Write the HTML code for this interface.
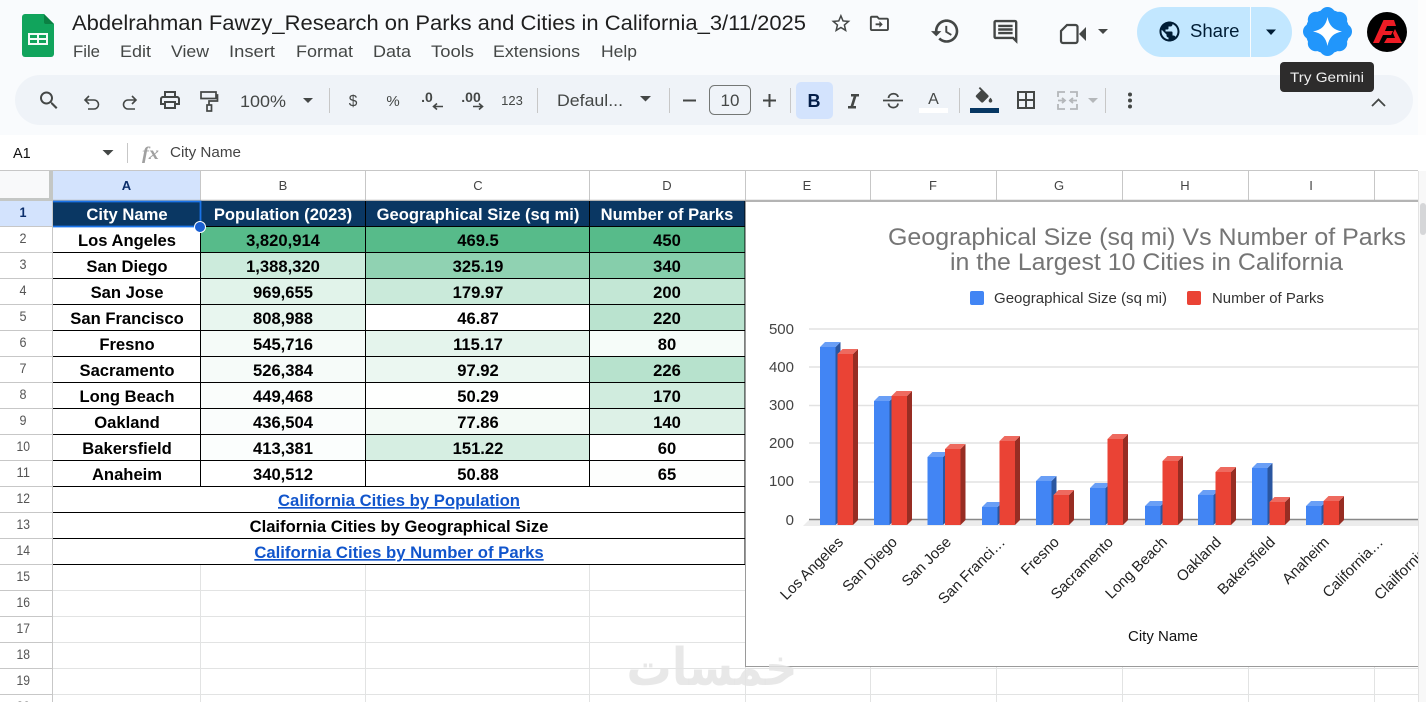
<!DOCTYPE html>
<html lang="en"><head><meta charset="utf-8"><title>Sheets</title>
<style>
html,body{margin:0;padding:0;background:#fff;width:1426px;height:702px;overflow:hidden}
svg{display:block;font-family:"Liberation Sans",Arial,sans-serif}
.m{font-size:16.5px;fill:#444746}
.ch{font-size:13px;fill:#444;text-anchor:middle}
.rh{font-size:13.5px;fill:#555}
.c{font-size:16.6px;font-weight:bold;fill:#000;text-anchor:middle}
.h{font-size:16.6px;font-weight:bold;fill:#fff;text-anchor:middle}
.l{font-size:16.7px;font-weight:bold;fill:#1155cc;text-anchor:middle;text-decoration:underline}
.ax{font-size:15px;fill:#444;text-anchor:end}
.xl{font-size:15px;fill:#222;text-anchor:end}
.ic{fill:#444746}
.tb{font-size:17px;fill:#444746}
</style></head><body>
<svg width="1426" height="702" viewBox="0 0 1426 702" xmlns="http://www.w3.org/2000/svg">
<defs><clipPath id="cc"><rect x="746" y="202" width="672" height="464"/></clipPath></defs>
<rect width="1426" height="702" fill="#fff"/>
<rect width="1418" height="135" fill="#f9fbfd"/>
<rect x="1418" width="8" height="135" fill="#fdfdfd"/>

<!-- logo -->
<path d="M25 14H44L54 24V54a3 3 0 0 1-3 3H25a3 3 0 0 1-3-3V17a3 3 0 0 1 3-3z" fill="#11a45c"/>
<path d="M44 14L54 24H46a2 2 0 0 1-2-2z" fill="#0b8043"/>
<path d="M28 33h20v12H28zM30 35v3h7v-3zM39 35v3h7v-3zM30 40v3h7v-3zM39 40v3h7v-3z" fill="#f3fbf6" fill-rule="evenodd"/>

<!-- title / menu -->
<text x="72" y="30" font-size="21.5" fill="#1f1f1f" textLength="734" lengthAdjust="spacingAndGlyphs">Abdelrahman Fawzy_Research on Parks and Cities in California_3/11/2025</text>
<text class="m" x="73" y="57" textLength="27" lengthAdjust="spacingAndGlyphs">File</text>
<text class="m" x="120" y="57" textLength="31" lengthAdjust="spacingAndGlyphs">Edit</text>
<text class="m" x="171" y="57" textLength="38" lengthAdjust="spacingAndGlyphs">View</text>
<text class="m" x="229" y="57" textLength="46" lengthAdjust="spacingAndGlyphs">Insert</text>
<text class="m" x="296" y="57" textLength="57" lengthAdjust="spacingAndGlyphs">Format</text>
<text class="m" x="373" y="57" textLength="38" lengthAdjust="spacingAndGlyphs">Data</text>
<text class="m" x="431" y="57" textLength="43" lengthAdjust="spacingAndGlyphs">Tools</text>
<text class="m" x="493" y="57" textLength="87" lengthAdjust="spacingAndGlyphs">Extensions</text>
<text class="m" x="601" y="57" textLength="36" lengthAdjust="spacingAndGlyphs">Help</text>

<!-- star + move -->
<path class="ic" transform="translate(829.5 12) scale(.95)" d="M22 9.24l-7.19-.62L12 2 9.19 8.63 2 9.24l5.46 4.73L5.82 21 12 17.27 18.18 21l-1.63-7.03L22 9.24zM12 15.4l-3.76 2.27 1-4.28-3.32-2.88 4.38-.38L12 6.1l1.71 4.04 4.38.38-3.32 2.88 1 4.28L12 15.4z"/>
<path class="ic" transform="translate(868 12) scale(.95)" d="M20 6h-8l-2-2H4c-1.1 0-1.99.9-1.99 2L2 18c0 1.1.9 2 2 2h16c1.100 0 2-.9 2-2V8c0-1.100-.9-2-2-2zm0 12H4V6h5.170l2 2H20v10zM12 14H8v-2h4v-2.500L15.500 13 12 16.500z"/>
<!-- history -->
<path class="ic" transform="translate(929.7 15.5) scale(1.3)" d="M13 3c-4.97 0-9 4.03-9 9H1l3.89 3.89.07.14L9 12H6c0-3.87 3.13-7 7-7s7 3.13 7 7-3.13 7-7 7c-1.93 0-3.68-.79-4.94-2.06l-1.42 1.42C8.27 19.99 10.51 21 13 21c4.97 0 9-4.03 9-9s-4.03-9-9-9zm-1 5v5l4.28 2.54.72-1.21-3.5-2.08V8H12z"/>
<!-- comment -->
<path class="ic" transform="translate(991 17.500) scale(1.2)" d="M21.99 4c0-1.100-.89-2-1.990-2H4c-1.100 0-2 .9-2 2v12c0 1.100.9 2 2 2h14l4 4-.01-18zM20 4v13.170L18.830 16H4V4h16zM6 12h12v2H6zm0-3h12v2H6zm0-3h12v2H6z"/>
<!-- video -->
<path d="M1067 25h8.500a2 2 0 0 1 2 2v14a2 2 0 0 1-2 2H1063a2 2 0 0 1-2-2V31z" fill="none" stroke="#444746" stroke-width="2.200"/>
<path d="M1079 34l7-7v14z" fill="#444746"/>
<path d="M1098 29h10l-5 5z" fill="#444746"/>
<!-- share -->
<path d="M1162 7H1250V57H1162a25 25 0 0 1 0-50z" fill="#c2e7ff"/>
<path d="M1251 7H1267a25 25 0 0 1 0 50H1251z" fill="#c2e7ff"/>
<path transform="translate(1157.500 19.500) scale(1)" fill="#001d35" d="M12 2C6.480 2 2 6.480 2 12s4.480 10 10 10 10-4.480 10-10S17.520 2 12 2zm-1 17.930c-3.950-.49-7-3.850-7-7.930 0-.62.080-1.210.21-1.790L9 15v1c0 1.100.9 2 2 2v1.930zm6.900-2.540c-.26-.81-1-1.390-1.900-1.390h-1v-3c0-.55-.45-1-1-1H8v-2h2c.55 0 1-.45 1-1V7h2c1.100 0 2-.9 2-2v-.41c2.930 1.190 5 4.060 5 7.410 0 2.080-.8 3.970-2.100 5.390z"/>
<text x="1190" y="37" font-size="18" fill="#001d35" textLength="49.500" lengthAdjust="spacingAndGlyphs">Share</text>
<path d="M1266 29.500h10l-5 5.500z" fill="#001d35"/>
<!-- gemini -->
<g fill="#2196fb">
<circle cx="1327.500" cy="31.500" r="22"/>
<circle cx="1327.500" cy="15" r="8"/><circle cx="1327.500" cy="48" r="8"/><circle cx="1311" cy="31.500" r="8"/><circle cx="1344" cy="31.500" r="8"/>
<circle cx="1315.800" cy="19.800" r="8"/><circle cx="1339.200" cy="19.800" r="8"/><circle cx="1315.800" cy="43.200" r="8"/><circle cx="1339.200" cy="43.200" r="8"/>
</g>
<path transform="translate(1327.500 31.500)" fill="#fff" d="M0-14.500C1.500-6 6-1.500 14.500 0 6 1.500 1.500 6 0 14.500-1.500 6-6 1.500-14.500 0-6-1.500-1.500-6 0-14.500Z"/>
<!-- avatar -->
<circle cx="1387" cy="32" r="20" fill="#000"/>
<path fill="#ee1c25" d="M1373 43L1383.500 20H1394L1396 26H1387L1385 31H1393L1391 35H1383L1379 43Z"/>
<path fill="#ee1c25" d="M1395 29L1402 43H1384L1387 38H1395L1393 33Z"/>

<!-- toolbar -->
<rect x="15" y="75" width="1398" height="50" rx="25" fill="#eff3f8"/>
<path class="ic" transform="translate(37 88.500)" d="M15.500 14h-.79l-.28-.27C15.410 12.590 16 11.110 16 9.500 16 5.910 13.090 3 9.500 3S3 5.910 3 9.500 5.910 16 9.500 16c1.610 0 3.090-.59 4.230-1.570l.27.28v.79l5 4.990L20.490 19l-4.990-5zm-6 0C7.010 14 5 11.990 5 9.500S7.010 5 9.500 5 14 7.010 14 9.500 11.990 14 9.500 14z"/>
<path d="M89 96l-4 4 4 4M85.500 100H94a4.500 4.500 0 0 1 0 9h-6" fill="none" stroke="#444746" stroke-width="1.600"/>
<path d="M132 96l4 4-4 4M135.500 100H128a4.500 4.500 0 0 0 0 9h7" fill="none" stroke="#444746" stroke-width="1.600"/>
<path class="ic" transform="translate(158 88)" d="M19 8h-1V3H6v5H5c-1.660 0-3 1.340-3 3v6h4v4h12v-4h4v-6c0-1.660-1.340-3-3-3zM8 5h8v3H8V5zm8 12v2H8v-4h8v2zm2-2v-2H6v2H4v-4c0-.55.45-1 1-1h14c.55 0 1 .45 1 1v4h-2z"/>
<path d="M201 92h15v6.500h-15zM216 95h1.500v6h-8.500v4" fill="none" stroke="#444746" stroke-width="1.700"/>
<rect x="207" y="105" width="4.500" height="6" fill="none" stroke="#444746" stroke-width="1.700"/>
<text class="tb" x="240" y="107" textLength="46" lengthAdjust="spacingAndGlyphs">100%</text>
<path class="ic" d="M303 98h10l-5 5z"/>
<path d="M329.500 88v25M537.500 88v25M669.500 88v25M790.500 88v25M959.500 88v25M1105.500 88v25" stroke="#c7c7c7"/>
<text x="353" y="106" font-size="15.500" fill="#444746" text-anchor="middle">$</text>
<text x="393" y="106" font-size="15" fill="#444746" text-anchor="middle">%</text>
<text x="427" y="102" font-size="14" fill="#444746" font-weight="bold" text-anchor="middle">.0</text>
<path d="M443 106.500h-9.500M437 103.500l-3.500 3 3.500 3" fill="none" stroke="#444746" stroke-width="1.600"/>
<text x="471" y="102" font-size="14" fill="#444746" font-weight="bold" text-anchor="middle">.00</text>
<path d="M473 106.500h9M479 103.500l3.500 3-3.500 3" fill="none" stroke="#444746" stroke-width="1.600"/>
<text x="512" y="105" font-size="13" fill="#444746" text-anchor="middle">123</text>
<text class="tb" x="557" y="106" textLength="66" lengthAdjust="spacingAndGlyphs">Defaul...</text>
<path class="ic" d="M640 96h11l-5.500 5.500z"/>
<path d="M683 100.500h13M763 100.500h13M769.500 94v13" stroke="#444746" stroke-width="2" fill="none"/>
<rect x="709.500" y="85.500" width="41" height="29" rx="5" fill="#eff3f8" stroke="#747775"/>
<text class="tb" x="730" y="106" text-anchor="middle" font-size="17.500">10</text>
<rect x="796" y="82" width="37" height="37" rx="5" fill="#d3e3fd"/>
<text x="814" y="107" font-size="18" font-weight="bold" fill="#041e49" text-anchor="middle">B</text>
<path class="ic" d="M851 94h8v2.500h-2.600l-3 9.500h2.600v2.500h-8V106h2.600l3-9.500H851z"/>
<path d="M883 100.500h20" stroke="#444746" stroke-width="1.800"/>
<path d="M888.500 98c.5-5.500 9-5.500 9.500-1M888.500 103.500c.5 5.500 9 5.500 9.500 0" fill="none" stroke="#444746" stroke-width="1.800"/>
<text x="933.500" y="104" font-size="16" fill="#444746" text-anchor="middle">A</text>
<rect x="919" y="108" width="29" height="5" fill="#fff"/>
<path class="ic" transform="translate(973 87) scale(.92)" d="M16.560 8.940L7.620 0 6.210 1.410l2.380 2.380-5.150 5.150c-.59.59-.59 1.540 0 2.120l5.500 5.500c.29.29.68.44 1.060.44s.77-.15 1.060-.44l5.500-5.500c.59-.58.59-1.530 0-2.120zM19 11.500s-2 2.170-2 3.500c0 1.100.9 2 2 2s2-.9 2-2c0-1.330-2-3.500-2-3.500z"/>
<rect x="970" y="108" width="29" height="5" fill="#073763"/>
<path class="ic" transform="translate(1014 88)" d="M3 3v18h18V3H3zm8 16H5v-6h6v6zm0-8H5V5h6v6zm8 8h-6v-6h6v6zm0-8h-6V5h6v6z"/>
<g fill="none" stroke="#b4b7ba" stroke-width="1.800">
<path d="M1058 97v-5h7M1058 104v5h7M1077 97v-5h-7M1077 104v5h-7"/>
<path d="M1058 100.500h6M1062 98l3 2.500-3 2.500M1077 100.500h-6M1073 98l-3 2.500 3 2.500"/>
</g>
<path fill="#b4b7ba" d="M1088 98h10l-5 5z"/>
<circle class="ic" cx="1130" cy="94.500" r="2"/><circle class="ic" cx="1130" cy="100.500" r="2"/><circle class="ic" cx="1130" cy="106.500" r="2"/>
<path d="M1372 106l6.500-6.500 6.500 6.500" fill="none" stroke="#444746" stroke-width="1.800"/>

<!-- tooltip -->
<rect x="1280" y="62" width="94" height="30" rx="4" fill="#2d2c2c"/>
<text x="1327" y="82" font-size="14" fill="#efefef" text-anchor="middle" textLength="74" lengthAdjust="spacingAndGlyphs">Try Gemini</text>

<!-- formula bar -->
<text x="13" y="158" font-size="14.500" fill="#111">A1</text>
<path fill="#444746" d="M102.500 150h11l-5.500 5.500z"/>
<path d="M127.500 143v20" stroke="#c7c7c7"/>
<text x="142" y="159" font-size="18" font-style="italic" font-family="Liberation Serif,serif" fill="#a0a0a0" font-weight="bold" textLength="17" lengthAdjust="spacingAndGlyphs">fx</text>
<text x="170" y="157" font-size="14.500" fill="#444" textLength="71" lengthAdjust="spacingAndGlyphs">City Name</text>

<!-- grid headers -->
<path d="M0 170.500H1418" stroke="#c7c7c7" stroke-width="1"/>
<rect x="0" y="171" width="52" height="30" fill="#f8f9fa"/>
<rect x="49" y="171" width="4" height="30" fill="#c4c7c5"/>
<rect x="0" y="198" width="53" height="3" fill="#c4c7c5"/>
<rect x="53" y="171" width="147" height="30" fill="#d3e3fd"/>
<rect x="0" y="201" width="52" height="25" fill="#d3e3fd"/>
<path d="M200.500 171v29M365.500 171v29M589.500 171v29M745.500 171v29M870.500 171v29M996.500 171v29M1122.500 171v29M1248.500 171v29M1374.500 171v29" stroke="#c7c7c7"/>
<path d="M53 200.500H1418" stroke="#b4b4b4" stroke-width="1.500"/>
<text class="ch" x="126.500" y="190" font-weight="bold" style="fill:#0b2e6b">A</text>
<text class="ch" x="283" y="190">B</text>
<text class="ch" x="478" y="190">C</text>
<text class="ch" x="667" y="190">D</text>
<text class="ch" x="807" y="190">E</text>
<text class="ch" x="933" y="190">F</text>
<text class="ch" x="1059" y="190">G</text>
<text class="ch" x="1185" y="190">H</text>
<text class="ch" x="1311" y="190">I</text>

<!-- row headers -->
<path d="M52.500 201V702" stroke="#c7c7c7"/>
<path d="M0 226.500h52M0 252.500h52M0 278.500h52M0 304.500h52M0 330.500h52M0 356.500h52M0 382.500h52M0 408.500h52M0 434.500h52M0 460.500h52M0 486.500h52M0 512.500h52M0 538.500h52M0 564.500h52M0 590.500h52M0 616.500h52M0 642.500h52M0 668.500h52M0 694.500h52" stroke="#c7c7c7"/>
<text class="rh" x="19.500" y="217" font-weight="bold" style="fill:#0b2e6b" textLength="7" lengthAdjust="spacingAndGlyphs">1</text>
<text class="rh" x="19.500" y="243" textLength="7" lengthAdjust="spacingAndGlyphs">2</text>
<text class="rh" x="19.500" y="269" textLength="7" lengthAdjust="spacingAndGlyphs">3</text>
<text class="rh" x="19.500" y="295" textLength="7" lengthAdjust="spacingAndGlyphs">4</text>
<text class="rh" x="19.500" y="321" textLength="7" lengthAdjust="spacingAndGlyphs">5</text>
<text class="rh" x="19.500" y="347" textLength="7" lengthAdjust="spacingAndGlyphs">6</text>
<text class="rh" x="19.500" y="373" textLength="7" lengthAdjust="spacingAndGlyphs">7</text>
<text class="rh" x="19.500" y="399" textLength="7" lengthAdjust="spacingAndGlyphs">8</text>
<text class="rh" x="19.500" y="425" textLength="7" lengthAdjust="spacingAndGlyphs">9</text>
<text class="rh" x="16.500" y="451" textLength="13.500" lengthAdjust="spacingAndGlyphs">10</text>
<text class="rh" x="16.500" y="477" textLength="13.500" lengthAdjust="spacingAndGlyphs">11</text>
<text class="rh" x="16.500" y="503" textLength="13.500" lengthAdjust="spacingAndGlyphs">12</text>
<text class="rh" x="16.500" y="529" textLength="13.500" lengthAdjust="spacingAndGlyphs">13</text>
<text class="rh" x="16.500" y="555" textLength="13.500" lengthAdjust="spacingAndGlyphs">14</text>
<text class="rh" x="16.500" y="581" textLength="13.500" lengthAdjust="spacingAndGlyphs">15</text>
<text class="rh" x="16.500" y="607" textLength="13.500" lengthAdjust="spacingAndGlyphs">16</text>
<text class="rh" x="16.500" y="633" textLength="13.500" lengthAdjust="spacingAndGlyphs">17</text>
<text class="rh" x="16.500" y="659" textLength="13.500" lengthAdjust="spacingAndGlyphs">18</text>
<text class="rh" x="16.500" y="685" textLength="13.500" lengthAdjust="spacingAndGlyphs">19</text>
<text class="rh" x="16.500" y="711" textLength="13.500" lengthAdjust="spacingAndGlyphs">20</text>

<!-- empty grid -->
<path d="M53 590.500H745M53 616.500H745M53 642.500H745M53 668.500H1418M53 694.500H1418M200.500 565V702M365.500 565V702M589.500 565V702M745.500 565V702M870.500 666V702M996.500 666V702M1122.500 666V702M1248.500 666V702M1374.500 666V702" stroke="#e2e3e3"/>

<!-- table -->
<rect x="53" y="201" width="692" height="25" fill="#0a3763"/>
<g>
<rect x="201" y="227" width="164" height="25" fill="#57bb8a"/><rect x="366" y="227" width="223" height="25" fill="#57bb8a"/><rect x="590" y="227" width="155" height="25" fill="#57bb8a"/>
<rect x="201" y="253" width="164" height="25" fill="rgb(204,235,220)"/><rect x="366" y="253" width="223" height="25" fill="rgb(144,210,178)"/><rect x="590" y="253" width="155" height="25" fill="rgb(134,206,171)"/>
<rect x="201" y="279" width="164" height="25" fill="rgb(225,243,234)"/><rect x="366" y="279" width="223" height="25" fill="rgb(202,234,218)"/><rect x="590" y="279" width="155" height="25" fill="rgb(195,231,213)"/>
<rect x="201" y="305" width="164" height="25" fill="rgb(232,246,239)"/><rect x="590" y="305" width="155" height="25" fill="rgb(186,227,207)"/>
<rect x="201" y="331" width="164" height="25" fill="rgb(245,251,248)"/><rect x="366" y="331" width="223" height="25" fill="rgb(228,244,236)"/><rect x="590" y="331" width="155" height="25" fill="rgb(246,252,249)"/>
<rect x="201" y="357" width="164" height="25" fill="rgb(246,251,249)"/><rect x="366" y="357" width="223" height="25" fill="rgb(235,247,241)"/><rect x="590" y="357" width="155" height="25" fill="rgb(183,226,205)"/>
<rect x="201" y="383" width="164" height="25" fill="rgb(250,253,251)"/><rect x="366" y="383" width="223" height="25" fill="rgb(254,255,254)"/><rect x="590" y="383" width="155" height="25" fill="rgb(208,236,222)"/>
<rect x="201" y="409" width="164" height="25" fill="rgb(250,253,252)"/><rect x="366" y="409" width="223" height="25" fill="rgb(243,250,246)"/><rect x="590" y="409" width="155" height="25" fill="rgb(221,241,231)"/>
<rect x="201" y="435" width="164" height="25" fill="rgb(251,254,253)"/><rect x="366" y="435" width="223" height="25" fill="rgb(214,238,226)"/>
<rect x="590" y="461" width="155" height="25" fill="rgb(253,254,253)"/>
</g>
<path d="M53 226.500H745M53 252.500H745M53 278.500H745M53 304.500H745M53 330.500H745M53 356.500H745M53 382.500H745M53 408.500H745M53 434.500H745M53 460.500H745M53 486.500H745M53 512.500H745M53 538.500H745M53 564.500H745M200.500 201V486M365.500 201V486M589.500 201V486M745 201V565" stroke="#000"/>

<text class="h" x="127" y="220">City Name</text>
<text class="h" x="283" y="220">Population (2023)</text>
<text class="h" x="478" y="220">Geographical Size (sq mi)</text>
<text class="h" x="667" y="220">Number of Parks</text>

<text class="c" x="127" y="246">Los Angeles</text><text class="c" x="283" y="246">3,820,914</text><text class="c" x="478" y="246">469.5</text><text class="c" x="667" y="246">450</text>
<text class="c" x="127" y="272">San Diego</text><text class="c" x="283" y="272">1,388,320</text><text class="c" x="478" y="272">325.19</text><text class="c" x="667" y="272">340</text>
<text class="c" x="127" y="298">San Jose</text><text class="c" x="283" y="298">969,655</text><text class="c" x="478" y="298">179.97</text><text class="c" x="667" y="298">200</text>
<text class="c" x="127" y="324">San Francisco</text><text class="c" x="283" y="324">808,988</text><text class="c" x="478" y="324">46.87</text><text class="c" x="667" y="324">220</text>
<text class="c" x="127" y="350">Fresno</text><text class="c" x="283" y="350">545,716</text><text class="c" x="478" y="350">115.17</text><text class="c" x="667" y="350">80</text>
<text class="c" x="127" y="376">Sacramento</text><text class="c" x="283" y="376">526,384</text><text class="c" x="478" y="376">97.92</text><text class="c" x="667" y="376">226</text>
<text class="c" x="127" y="402">Long Beach</text><text class="c" x="283" y="402">449,468</text><text class="c" x="478" y="402">50.29</text><text class="c" x="667" y="402">170</text>
<text class="c" x="127" y="428">Oakland</text><text class="c" x="283" y="428">436,504</text><text class="c" x="478" y="428">77.86</text><text class="c" x="667" y="428">140</text>
<text class="c" x="127" y="454">Bakersfield</text><text class="c" x="283" y="454">413,381</text><text class="c" x="478" y="454">151.22</text><text class="c" x="667" y="454">60</text>
<text class="c" x="127" y="480">Anaheim</text><text class="c" x="283" y="480">340,512</text><text class="c" x="478" y="480">50.88</text><text class="c" x="667" y="480">65</text>
<text class="l" x="399" y="506">California Cities by Population</text>
<text class="c" x="399" y="532">Claifornia Cities by Geographical Size</text>
<text class="l" x="399" y="558">California Cities by Number of Parks</text>

<!-- selection -->
<path d="M53 201.500H200.500V226.500H53" fill="none" stroke="#1a73e8" stroke-width="1.800"/>
<circle cx="200" cy="227" r="5.500" fill="#1a5fd0" stroke="#fff" stroke-width="1"/>

<!-- chart -->
<rect x="746" y="202" width="672" height="464" fill="#fff"/>
<path d="M745.500 201.500V666.500H1418" fill="none" stroke="#9a9a9a"/>
<path d="M746 201.500H1418" stroke="#b4b4b4"/>
<g clip-path="url(#cc)">
<text x="888" y="245" font-size="24.500" fill="#757575" textLength="518" lengthAdjust="spacingAndGlyphs">Geographical Size (sq mi) Vs Number of Parks</text>
<text x="950" y="270" font-size="24.500" fill="#757575" textLength="393" lengthAdjust="spacingAndGlyphs">in the Largest 10 Cities in California</text>
<rect x="970" y="291" width="14" height="14" rx="2" fill="#4285f4"/>
<text x="994" y="303" font-size="14.500" fill="#333" textLength="173" lengthAdjust="spacingAndGlyphs">Geographical Size (sq mi)</text>
<rect x="1187" y="291" width="14" height="14" rx="2" fill="#ea4335"/>
<text x="1212" y="303" font-size="14.500" fill="#333" textLength="112" lengthAdjust="spacingAndGlyphs">Number of Parks</text>

<path d="M809 329H1418M809 367H1418M809 405.500H1418M809 443H1418M809 482H1418" stroke="#e2e2e2" stroke-width="1.500"/>
<path d="M803 526L809 520H1418V526z" fill="#ececec"/>
<path d="M809 519.500H1418" stroke="#888" stroke-width="1.500"/>
<text class="ax" x="794" y="334">500</text><text class="ax" x="794" y="372">400</text><text class="ax" x="794" y="410">300</text><text class="ax" x="794" y="448">200</text><text class="ax" x="794" y="486">100</text><text class="ax" x="794" y="525">0</text>

<!-- blue bars -->
<path fill="#2a56a0" d="M835.500 347l5-5V520l-5 5zM889.500 401l5-5V520l-5 5zM943 457l5-5V520l-5 5zM997.500 507l5-5V520l-5 5zM1051.500 481l5-5V520l-5 5zM1105.500 488l5-5V520l-5 5zM1160.500 506l5-5V520l-5 5zM1213.500 495l5-5V520l-5 5zM1267.500 468l5-5V520l-5 5zM1321.500 506l5-5V520l-5 5z"/>
<path fill="#6a9ff6" d="M820 347h15.500l5-5h-15.500zM874 401h15.500l5-5h-15.500zM927.500 457h15.500l5-5h-15.500zM982 507h15.500l5-5h-15.500zM1036 481h15.500l5-5h-15.500zM1090 488h15.500l5-5h-15.500zM1145 506h15.500l5-5h-15.500zM1198 495h15.500l5-5h-15.500zM1252 468h15.500l5-5h-15.500zM1306 506h15.500l5-5h-15.500z"/>
<path fill="#4285f4" d="M820 347h15.500V525H820zM874 401h15.500V525H874zM927.500 457h15.500V525H927.500zM982 507h15.500V525H982zM1036 481h15.500V525H1036zM1090 488h15.500V525H1090zM1145 506h15.500V525H1145zM1198 495h15.500V525H1198zM1252 468h15.500V525H1252zM1306 506h15.500V525H1306z"/>
<!-- red bars -->
<path fill="#972d23" d="M853 354l5-5V520l-5 5zM907 396l5-5V520l-5 5zM960.500 449l5-5V520l-5 5zM1015 441l5-5V520l-5 5zM1069 495l5-5V520l-5 5zM1123 439l5-5V520l-5 5zM1178 461l5-5V520l-5 5zM1231 472l5-5V520l-5 5zM1285 502l5-5V520l-5 5zM1339 501l5-5V520l-5 5z"/>
<path fill="#ee6a5f" d="M837.500 354h15.500l5-5h-15.500zM891.500 396h15.500l5-5h-15.500zM945 449h15.500l5-5h-15.500zM999.500 441h15.500l5-5h-15.500zM1053.500 495h15.500l5-5h-15.500zM1107.500 439h15.500l5-5h-15.500zM1162.500 461h15.500l5-5h-15.500zM1215.500 472h15.500l5-5h-15.500zM1269.500 502h15.500l5-5h-15.500zM1323.500 501h15.500l5-5h-15.500z"/>
<path fill="#ea4335" d="M837.500 354h15.500V525h-15.500zM891.500 396h15.500V525h-15.500zM945 449h15.500V525H945zM999.500 441h15.500V525h-15.500zM1053.500 495h15.500V525h-15.500zM1107.500 439h15.500V525h-15.500zM1162.500 461h15.500V525h-15.500zM1215.500 472h15.500V525h-15.500zM1269.500 502h15.500V525h-15.500zM1323.500 501h15.500V525h-15.500z"/>

<text class="xl" x="844" y="543" transform="rotate(-45 844 543)">Los Angeles</text>
<text class="xl" x="898" y="543" transform="rotate(-45 898 543)">San Diego</text>
<text class="xl" x="952" y="543" transform="rotate(-45 952 543)">San Jose</text>
<text class="xl" x="1006" y="543" transform="rotate(-45 1006 543)">San Franci…</text>
<text class="xl" x="1060" y="543" transform="rotate(-45 1060 543)">Fresno</text>
<text class="xl" x="1114" y="543" transform="rotate(-45 1114 543)">Sacramento</text>
<text class="xl" x="1168" y="543" transform="rotate(-45 1168 543)">Long Beach</text>
<text class="xl" x="1222" y="543" transform="rotate(-45 1222 543)">Oakland</text>
<text class="xl" x="1276" y="543" transform="rotate(-45 1276 543)">Bakersfield</text>
<text class="xl" x="1330" y="543" transform="rotate(-45 1330 543)">Anaheim</text>
<text class="xl" x="1384" y="543" transform="rotate(-45 1384 543)">California…</text>
<text class="xl" x="1438" y="543" transform="rotate(-45 1438 543)">Clailfornia…</text>
<text x="1163" y="641" font-size="15" fill="#111" text-anchor="middle" textLength="70" lengthAdjust="spacingAndGlyphs">City Name</text>
</g>

<!-- scrollbar -->
<rect x="1418" y="171" width="8" height="531" fill="#f8f8f8"/>
<path d="M1418.500 171V702" stroke="#e3e3e3"/>
<rect x="1420" y="203" width="6" height="32" rx="3" fill="#d5d6d8"/>

<!-- watermark -->
<text x="712" y="685" font-size="52" font-weight="bold" font-family="DejaVu Sans,sans-serif" fill="#e4e4e4" fill-opacity=".85" text-anchor="middle" textLength="171" lengthAdjust="spacingAndGlyphs" direction="rtl">خمسات</text>
</svg>
</body></html>
